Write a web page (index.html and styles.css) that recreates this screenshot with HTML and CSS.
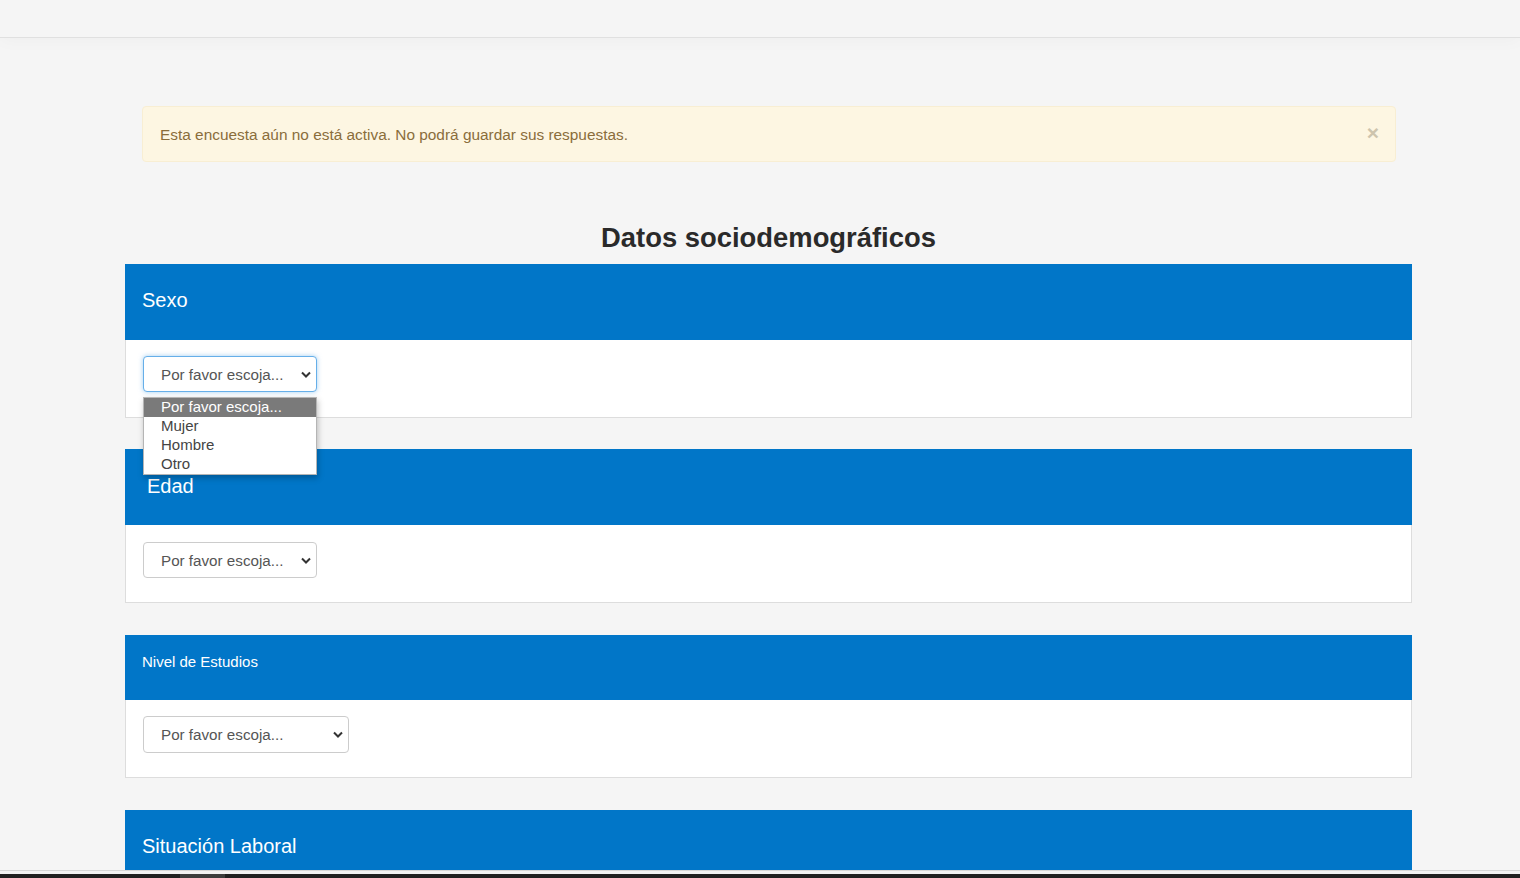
FILE: index.html
```html
<!DOCTYPE html>
<html lang="es">
<head>
    <meta charset="UTF-8">
    <meta name="viewport" content="width=device-width, initial-scale=1.0">
    <title>Datos sociodemográficos</title>
    <link rel="stylesheet" href="styles.css">
</head>
<body>
    <div class="barra-superior"></div>

    <div class="contenedor">
        <div class="alerta">
            <span>Esta encuesta aún no está activa. No podrá guardar sus respuestas.</span>
            <span class="cerrar">&times;</span>
        </div>

        <h1 class="titulo-grupo">Datos sociodemográficos</h1>

        <div class="pregunta primera">
            <div class="cabecera">Sexo</div>
            <div class="cuerpo">
                <div class="selector activo">
                    <select>
                        <option>Por favor escoja...</option>
                        <option>Mujer</option>
                        <option>Hombre</option>
                        <option>Otro</option>
                    </select>
                    <svg class="flecha" width="10" height="7" viewBox="0 0 10 7"><path d="M1 1.5 L5 5.5 L9 1.5" fill="none" stroke="#333" stroke-width="2"/></svg>
                </div>
                <!-- lista desplegada del primer selector -->
                <ul class="lista-opciones">
                    <li class="marcada">Por favor escoja...</li>
                    <li>Mujer</li>
                    <li>Hombre</li>
                    <li>Otro</li>
                </ul>
            </div>
        </div>

        <div class="pregunta">
            <div class="cabecera cabecera-edad">Edad</div>
            <div class="cuerpo cuerpo-edad">
                <div class="selector">
                    <select>
                        <option>Por favor escoja...</option>
                    </select>
                    <svg class="flecha" width="10" height="7" viewBox="0 0 10 7"><path d="M1 1.5 L5 5.5 L9 1.5" fill="none" stroke="#333" stroke-width="2"/></svg>
                </div>
            </div>
        </div>

        <div class="pregunta">
            <div class="cabecera cabecera-pequena">Nivel de Estudios</div>
            <div class="cuerpo">
                <div class="selector ancho">
                    <select>
                        <option>Por favor escoja...</option>
                    </select>
                    <svg class="flecha" width="10" height="7" viewBox="0 0 10 7"><path d="M1 1.5 L5 5.5 L9 1.5" fill="none" stroke="#333" stroke-width="2"/></svg>
                </div>
            </div>
        </div>

        <div class="pregunta">
            <div class="cabecera">Situación Laboral</div>
            <div class="cuerpo">
                <div class="selector">
                    <select>
                        <option>Por favor escoja...</option>
                    </select>
                </div>
            </div>
        </div>
    </div>

    <div class="pie-ventana"><span class="marca"></span></div>
</body>
</html>
```

FILE: styles.css
```css
body {
    margin: 0;
    background-color: #f5f5f5;
    font-family: "Liberation Sans", Arial, sans-serif;
    color: #333;
    overflow: hidden;
}
.barra-superior {
    height: 37px;
    background-color: #f5f5f5;
    border-bottom: 1px solid #e0e0e0;
    box-shadow: 0 2px 18px rgba(0, 0, 0, 0.03);
}
.contenedor {
    width: 1287px;
    margin-left: 125px;
    padding-top: 68px;
}
.alerta {
    display: flex;
    justify-content: space-between;
    align-items: center;
    margin: 0 16px 0 17px;
    height: 54px;
    padding: 2px 17px 0;
    box-sizing: border-box;
    height: 56px;
    background-color: #fdf6e2;
    border: 1px solid #f8eed3;
    border-radius: 4px;
    color: #8a6d3b;
    font-size: 15.4px;
}
.cerrar {
    color: #cdc4ad;
    font-size: 21px;
    font-weight: bold;
    line-height: 1;
    margin-top: -6px;
    margin-right: -1px;
}
.titulo-grupo {
    margin: 62px 0 0;
    height: 40px;
    line-height: 28px;
    font-size: 27.4px;
    font-weight: bold;
    text-align: center;
    color: #2a2a2a;
}
.pregunta {
    margin-bottom: 32px;
}
.pregunta.primera {
    margin-bottom: 31px;
}
.cabecera {
    height: 76px;
    line-height: 72px;
    padding: 0 17px;
    background-color: #0176c8;
    color: #fff;
    font-size: 20px;
}
.cabecera-edad {
    padding-left: 22px;
    line-height: 74px;
}
.cabecera-pequena {
    height: 65px;
    line-height: 18px;
    padding-top: 18px;
    box-sizing: border-box;
    font-size: 15px;
}
.cuerpo {
    position: relative;
    background-color: #fff;
    border: 1px solid #ddd;
    border-top: none;
    height: 78px;
    padding: 16px 17px 0;
    box-sizing: border-box;
}
.cuerpo-edad {
    padding-top: 17px;
}
.selector {
    position: relative;
    width: 174px;
    height: 36px;
}
.selector.ancho {
    width: 206px;
    height: 37px;
}
.selector select {
    -webkit-appearance: none;
    appearance: none;
    width: 100%;
    height: 100%;
    padding: 0 17px;
    border: 1px solid #ccc;
    border-radius: 4px;
    background-color: #fff;
    color: #555;
    font-family: "Liberation Sans", Arial, sans-serif;
    font-size: 15.2px;
    outline: none;
}
.selector.activo select {
    border-color: #66afe9;
    box-shadow: 0 0 5px rgba(102, 175, 233, 0.6);
}
.flecha {
    position: absolute;
    right: 6px;
    top: 15px;
    pointer-events: none;
}
/* lista abierta del desplegable */
.lista-opciones {
    position: absolute;
    left: 17px;
    top: 57px;
    z-index: 2;
    width: 174px;
    margin: 0;
    padding: 0;
    list-style: none;
    background-color: #fff;
    border: 1px solid #b5b5b5;
    box-shadow: 1px 3px 6px rgba(0, 0, 0, 0.25);
    box-sizing: border-box;
    font-size: 15px;
    color: #444;
}
.lista-opciones li {
    height: 19px;
    line-height: 18px;
    padding-left: 17px;
}
.lista-opciones li.marcada {
    background-color: #7a7a7a;
    color: #fff;
}
.pie-ventana {
    position: fixed;
    left: 0;
    right: 0;
    bottom: 0;
    height: 4px;
    background-color: #202020;
    border-top: 3px solid #f2f2f2;
    box-shadow: 0 -1px 0 #d6d6d6;
}
.marca {
    display: block;
    margin-left: 180px;
    width: 45px;
    height: 4px;
    background-color: #3c3c3c;
}
```
